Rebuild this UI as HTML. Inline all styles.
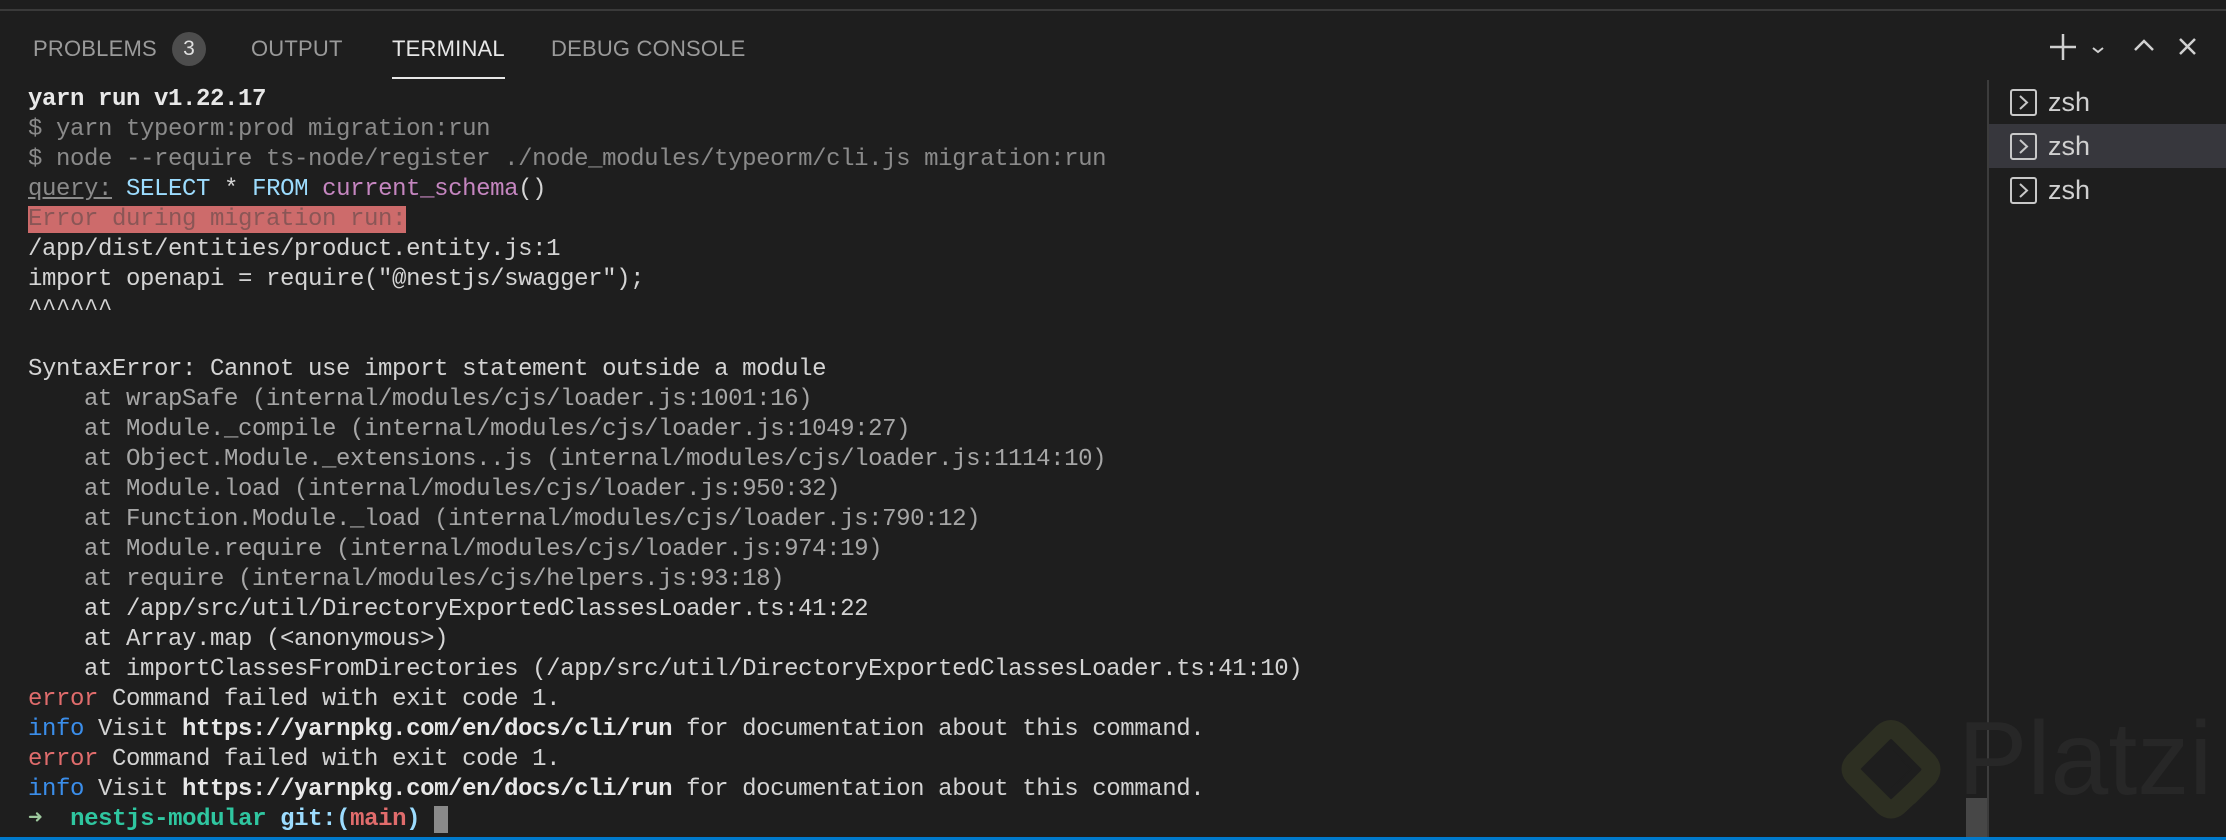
<!DOCTYPE html>
<html><head><meta charset="utf-8"><style>
*{margin:0;padding:0;box-sizing:border-box}
body{width:2226px;height:840px;background:#1e1e1e;position:relative;overflow:hidden;font-family:"Liberation Sans",sans-serif}
.top{position:absolute;left:0;top:0;width:2226px;height:11px;background:#1e1e1e;border-bottom:2px solid #3a3a3a}
.tab{position:absolute;top:36px;font-size:22px;color:#9a9a9a;letter-spacing:0.2px}
.badge{position:absolute;left:172px;top:32px;width:34px;height:34px;border-radius:17px;background:#4d4d4d;color:#e0e0e0;font-size:21px;text-align:center;line-height:34px}
.ul{position:absolute;left:392px;top:77px;width:113px;height:2px;background:#e7e7e7}
.term{position:absolute;left:28px;top:85px;font-family:"Liberation Mono",monospace;font-size:24px;letter-spacing:-0.4px;line-height:30px;color:#d4d4d4;white-space:pre}
.d{color:#8a8a8a}.g{color:#a6a6a6}.b{font-weight:bold;color:#e8e8e8}
.c{color:#9cdcfe}.p{color:#c586c0}.r{color:#e06c6c}.i{color:#3b8eea}.t{color:#2fc6a0;font-weight:bold}
.hl{background:#cd6b6b;color:#8a5656}
.side{position:absolute;left:1987px;top:80px;width:2px;height:760px;background:#3c3c3c}
.row{position:absolute;left:1989px;width:237px;height:44px}
.row .ic{position:absolute;left:21px;top:9px;width:27px;height:27px;border:2px solid #c8c8c8;border-radius:3px}
.row .tx{position:absolute;left:59px;top:7px;font-size:27px;color:#d0d0d0}
</style></head><body>
<div class="top"></div>
<div class="tab" style="left:33px">PROBLEMS</div>
<div class="badge">3</div>
<div class="tab" style="left:251px">OUTPUT</div>
<div class="tab" style="left:392px;color:#e7e7e7">TERMINAL</div>
<div class="ul"></div>
<div class="tab" style="left:551px">DEBUG CONSOLE</div>
<svg style="position:absolute;left:2040px;top:30px" width="186" height="36" viewBox="0 0 186 36" fill="none" stroke="#d0d0d0" stroke-width="2.5">
<path d="M23 4v26M10 17h26"/>
<path d="M53 18l5 4 5-4" stroke-width="2"/>
<path d="M95 20l9-9 9 9"/>
<path d="M140 9l15 15M155 9l-15 15"/>
</svg>
<div class="side"></div>
<div class="row" style="top:80px"><div class="ic"><svg width="23" height="23" style="position:absolute;left:0;top:0"><path d="M8 5l7 6.5-7 6.5" stroke="#c8c8c8" stroke-width="2" fill="none"/></svg></div><div class="tx">zsh</div></div>
<div class="row" style="top:124px;background:#37373d"><div class="ic"><svg width="23" height="23" style="position:absolute;left:0;top:0"><path d="M8 5l7 6.5-7 6.5" stroke="#c8c8c8" stroke-width="2" fill="none"/></svg></div><div class="tx">zsh</div></div>
<div class="row" style="top:168px"><div class="ic"><svg width="23" height="23" style="position:absolute;left:0;top:0"><path d="M8 5l7 6.5-7 6.5" stroke="#c8c8c8" stroke-width="2" fill="none"/></svg></div><div class="tx">zsh</div></div>
<svg style="position:absolute;left:1830px;top:705px" width="140" height="130" viewBox="0 0 140 130">
<path d="M78 92L98 72Q104 64 98 57L69 28Q61 21 53 28L24 57Q18 64 24 71L54 101Q61 107 68 101L84 86" stroke="#2d2f22" stroke-width="19" fill="none" stroke-linejoin="round"/>
<path d="M61 44L81 64L61 84" stroke="#1e1e1e" stroke-width="1" fill="none"/>
</svg>
<div style="position:absolute;left:1958px;top:700px;font-size:104px;color:#272727;font-family:'Liberation Sans',sans-serif">Platzi</div>
<div style="position:absolute;left:1966px;top:798px;width:21px;height:40px;background:#474747"></div>
<div class="term"><span class="b">yarn run v1.22.17</span>
<span class="d">$ yarn typeorm:prod migration:run</span>
<span class="d">$ node --require ts-node/register ./node_modules/typeorm/cli.js migration:run</span>
<span class="d" style="text-decoration:underline">query:</span> <span class="c">SELECT</span> * <span class="c">FROM</span> <span class="p">current_schema</span>()
<span class="hl">Error during migration run:</span>
/app/dist/entities/product.entity.js:1
import openapi = require("@nestjs/swagger");
^^^^^^

SyntaxError: Cannot use import statement outside a module
<span class="g">    at wrapSafe (internal/modules/cjs/loader.js:1001:16)
    at Module._compile (internal/modules/cjs/loader.js:1049:27)
    at Object.Module._extensions..js (internal/modules/cjs/loader.js:1114:10)
    at Module.load (internal/modules/cjs/loader.js:950:32)
    at Function.Module._load (internal/modules/cjs/loader.js:790:12)
    at Module.require (internal/modules/cjs/loader.js:974:19)
    at require (internal/modules/cjs/helpers.js:93:18)</span>
    at /app/src/util/DirectoryExportedClassesLoader.ts:41:22
    at Array.map (&lt;anonymous&gt;)
    at importClassesFromDirectories (/app/src/util/DirectoryExportedClassesLoader.ts:41:10)
<span class="r">error</span> Command failed with exit code 1.
<span class="i">info</span> Visit <span class="b">https://yarnpkg.com/en/docs/cli/run</span> for documentation about this command.
<span class="r">error</span> Command failed with exit code 1.
<span class="i">info</span> Visit <span class="b">https://yarnpkg.com/en/docs/cli/run</span> for documentation about this command.
<span style="color:#9ec99e">➜</span>  <span class="t">nestjs-modular</span> <span class="c" style="font-weight:bold">git:(</span><span class="r" style="font-weight:bold">main</span><span class="c" style="font-weight:bold">)</span> <span style="background:#8a8a8a"> </span></div>
<div style="position:absolute;left:0;top:837px;width:2226px;height:3px;background:#007acc"></div>
</body></html>
